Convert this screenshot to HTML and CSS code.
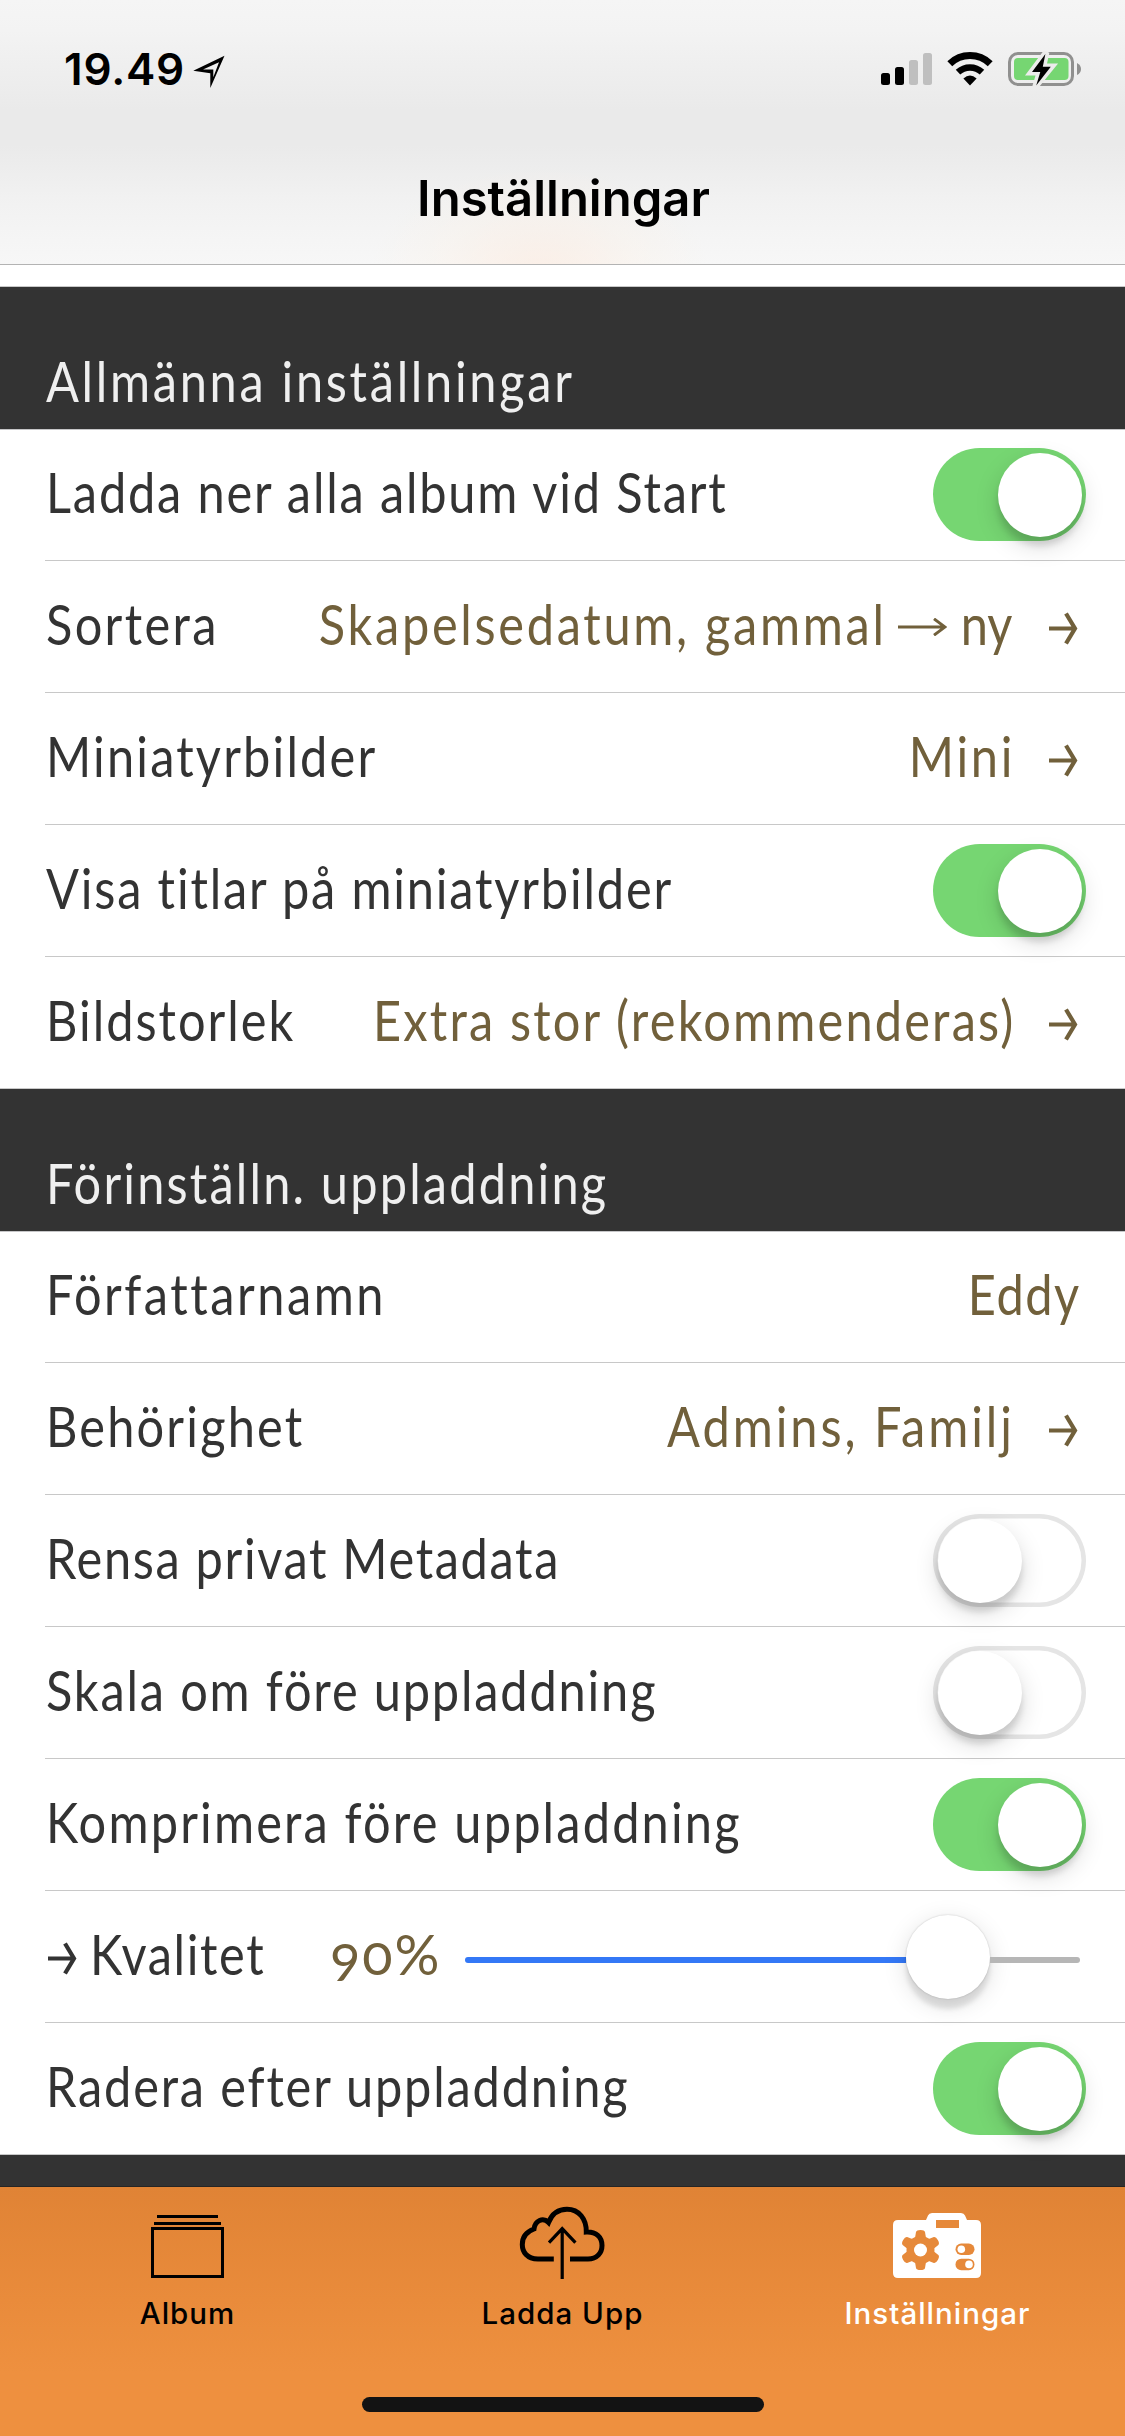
FILE: index.html
```html
<!DOCTYPE html>
<html lang="sv">
<head>
<meta charset="utf-8">
<title>Inställningar</title>
<link rel="stylesheet" href="styles.css">
</head>
<body>
<div class="screen">
  <header class="navbar">
    <div class="status">
      <span class="time">19.49</span>
      <svg class="location" width="36" height="34" viewBox="0 0 36 34"><path d="M3.300 15.700 34.500 .8 20.300 32.900V18.200ZM13 14.400H23.300V22.300L29 7.200Z" fill-rule="evenodd"/></svg>
      <span class="spacer"></span>
      <svg width="52" height="34" viewBox="0 0 52 34">
        <rect x="0" y="21" width="9" height="12" rx="2.5"/><rect x="14" y="15" width="9" height="18" rx="2.5"/>
        <rect x="28" y="8" width="9" height="25" rx="2.5" fill="#bfbfbf"/><rect x="42" y="1" width="9" height="32" rx="2.5" fill="#bfbfbf"/>
      </svg>
      <svg class="wifi" width="46" height="34" viewBox="0 0 46 34">
        <path d="M2.8 11.8A29 29 0 0 1 43.2 11.8" fill="none" stroke="#000" stroke-width="7"/>
        <path d="M11 20.2A17.5 17.5 0 0 1 35 20.2" fill="none" stroke="#000" stroke-width="6.5"/>
        <path d="M23 33.4 16.4 26.4Q23 20.6 29.6 26.4Z"/>
      </svg>
      <svg class="battery" width="74" height="36" viewBox="0 0 74 36">
        <rect x="1.5" y="2.5" width="63" height="31" rx="8.5" fill="none" stroke="#90908f" stroke-width="3"/>
        <rect x="6" y="7" width="54.5" height="22" rx="4" fill="#76d672"/>
        <path d="M69 12Q73 14 73 18T69 24Z" fill="#90908f"/>
        <path d="M38.4 1 23 21.5H31.5L27.2 36 43.8 15.5H35.3Z" fill="#ececeb" stroke="#ececeb" stroke-width="6"/>
        <path d="M37.4 3 24 21H32.3L28.2 34.5 42.8 15.8H34.8Z"/>
      </svg>
    </div>
    <h1 class="title">Inställningar</h1>
  </header>

  <main class="settings">
    <h2 class="section"><span class="text t31">Allmänna inställningar</span></h2>
    <ul class="rows">
      <li class="row"><span class="text t21">Ladda ner alla album vid Start</span><span class="toggle on"><i class="knob"></i></span></li>
      <li class="row"><span class="text t27">Sortera</span>
        <span class="value range"><span class="text t31">Skapelsedatum, gammal</span><svg class="long-arrow" width="49" height="18" viewBox="0 0 49 18"><path d="M0 9H47M36 .8 47 9 36 17.200" fill="none" stroke="#71603b" stroke-width="2.900"/></svg><span class="text t0">ny</span></span>
        <svg class="arrow" width="29" height="33" viewBox="0 0 29 33"><path d="M0 16.500H26M17 1.500 26 16.500 17 31.500" fill="none" stroke="#71603b" stroke-width="4.200"/></svg></li>
      <li class="row"><span class="text t25">Miniatyrbilder</span>
        <span class="value"><span class="text t31">Mini</span></span>
        <svg class="arrow" width="29" height="33" viewBox="0 0 29 33"><path d="M0 16.500H26M17 1.500 26 16.500 17 31.500" fill="none" stroke="#71603b" stroke-width="4.200"/></svg></li>
      <li class="row"><span class="text t21">Visa titlar på miniatyrbilder</span><span class="toggle on"><i class="knob"></i></span></li>
      <li class="row"><span class="text t23">Bildstorlek</span>
        <span class="value"><span class="text t25">Extra stor (rekommenderas)</span></span>
        <svg class="arrow" width="29" height="33" viewBox="0 0 29 33"><path d="M0 16.500H26M17 1.500 26 16.500 17 31.500" fill="none" stroke="#71603b" stroke-width="4.200"/></svg></li>
    </ul>
    <h2 class="section"><span class="text t25">Förinställn. uppladdning</span></h2>
    <ul class="rows">
      <li class="row"><span class="text t29">Författarnamn</span><span class="value plain"><span class="text t17">Eddy</span></span></li>
      <li class="row"><span class="text t25">Behörighet</span>
        <span class="value"><span class="text t34">Admins, Familj</span></span>
        <svg class="arrow" width="29" height="33" viewBox="0 0 29 33"><path d="M0 16.500H26M17 1.500 26 16.500 17 31.500" fill="none" stroke="#71603b" stroke-width="4.200"/></svg></li>
      <li class="row"><span class="text t19">Rensa privat Metadata</span><span class="toggle"><i class="knob"></i></span></li>
      <li class="row"><span class="text t21">Skala om före uppladdning</span><span class="toggle"><i class="knob"></i></span></li>
      <li class="row"><span class="text t25">Komprimera före uppladdning</span><span class="toggle on"><i class="knob"></i></span></li>
      <li class="row quality">
        <svg class="lead-arrow" width="29" height="33" viewBox="0 0 29 33"><path d="M0 16.500H26M17 1.500 26 16.500 17 31.500" fill="none" stroke="#333" stroke-width="4.200"/></svg>
        <span class="text t19 name">Kvalitet</span><span class="percent">90%</span>
        <span class="slider"><i class="filled"></i><i class="knob"></i><i class="rest"></i></span></li>
      <li class="row"><span class="text t21">Radera efter uppladdning</span><span class="toggle on"><i class="knob"></i></span></li>
    </ul>
  </main>

  <footer class="tabbar">
    <nav class="tabs">
      <a class="tab">
        <svg width="91" height="82" viewBox="0 0 91 82"><path d="M15 13.500H76M12 20.500H79M10.500 25.500H80.500V73.500H10.500Z" fill="none" stroke="#000" stroke-width="3"/></svg>
        <span>Album</span></a>
      <a class="tab">
        <svg width="91" height="82" viewBox="0 0 91 82" fill="none" stroke="#000">
          <path d="M36.800 56H21C10 56 5.300 49 5.300 41.500C5.300 34 10 28.500 17 26C18 17.500 26 14 31.500 19.500C35.500 9.500 42 6.300 50 6.300C62 6.300 69.500 16 69.300 29C79 28.500 85 34 85 42.500C85 50 80 56 71 56H53" stroke-width="5"/>
          <path d="M45.200 76V26M32 39.700 45.200 25.700 58.400 39.700" stroke-width="3.200"/>
        </svg>
        <span>Ladda Upp</span></a>
      <a class="tab active">
        <svg width="91" height="82" viewBox="0 0 91 82">
          <path d="M1 22Q1 17 6 17H34L36 12.500Q37 10 40 10H69Q72 10 73 12.500L75 17H84Q89 17 89 22V70Q89 75 84 75H6Q1 75 1 70Z" fill="#fff"/>
          <g fill="#e6893a">
            <rect x="44" y="17" width="23" height="8"/>
            <g transform="translate(28.500 47)">
              <circle r="14"/>
              <path id="cog" d="M-4.500-18Q-4-20 0-20T4.500-18L5.500-12H-5.500ZM-4.500 18Q-4 20 0 20T4.500 18L5.500 12H-5.500Z"/>
              <use href="#cog" transform="rotate(60)"/><use href="#cog" transform="rotate(120)"/>
              <circle r="6.500" fill="#fff"/>
            </g>
            <rect x="63.500" y="40.500" width="19" height="11.500" rx="5.700"/><rect x="63.500" y="55.700" width="19" height="11.500" rx="5.700"/>
          </g>
          <circle cx="69.300" cy="46.200" r="3.800" fill="#fff"/><circle cx="77" cy="61.400" r="3.800" fill="#fff"/>
        </svg>
        <span>Inställningar</span></a>
    </nav>
    <div class="home"></div>
  </footer>
</div>
</body>
</html>
```
FILE: styles.css
```css
* { box-sizing: border-box; }
body { margin: 0; font-family: "Lato", "Open Sans", sans-serif; }
svg { display: block; flex: none; }

.screen { width: 1125px; height: 2436px; display: flex; flex-direction: column; background: #fff; overflow: hidden; }

/* Status bar and title */
.navbar {
  height: 265px;
  flex: none;
  font-family: "Inter", sans-serif;
  font-weight: 600;
  color: #000;
  border-bottom: 1px solid #b3b3b3;
  background:
    radial-gradient(ellipse 170px 110px at 540px 275px, rgba(255, 230, 214, .5), rgba(255, 238, 220, .2) 60%, rgba(255, 240, 225, 0)),
    linear-gradient(#f5f5f5 0, #f3f3f3 30px, #eaeaea 110px, #eaeaea 145px, #f2f2f2 205px, #f7f7f7 264px);
}
.status { height: 169px; padding: 43px 44px 0 64px; display: flex; align-items: flex-start; }
.time { width: 118px; font-size: 44px; line-height: 53px; letter-spacing: .8px; white-space: nowrap; }
.location { margin: 12px 0 0 8px; }
.spacer { flex: 1; }
.status svg:not(.location) { margin-top: 9px; }
.status .wifi { margin-left: 14px; }
.status .battery { margin-left: 15px; margin-top: 8px !important; margin-right: -1px; }
.title { margin: 0 0 0 2px; font-size: 49px; line-height: 59px; font-weight: 600; text-align: center; }

/* Settings list */
.settings { flex: 1; margin-top: 21px; background: #333; border-top: 1px solid #c8c8c8; min-height: 0; overflow: hidden; }
.section {
  margin: 0 0 -1px;
  height: 143px;
  padding: 0 0 15px 46px;
  display: flex;
  align-items: flex-end;
  color: #efefef;
  background: #333;
  border-bottom: 1px solid #c6c6c8;
  font-weight: 400;
}
.rows { margin: 0; padding: 0; list-style: none; background: linear-gradient(#c6c6c8, #c6c6c8) 0 0 / 100% 1px no-repeat #fff; }
.row {
  height: 132px;
  display: flex;
  align-items: center;
  padding: 0 48px 1px 46px;
  color: #333;
  background: linear-gradient(#c8c8c8, #c8c8c8) 45px 100% / 100% 1px no-repeat;
}
.row:last-child { background-position: 0 100%; }
.text { font-size: 56px; line-height: 67px; white-space: nowrap; transform: scaleX(.87); transform-origin: 0 50%; flex: none; }
.row .text { margin-bottom: 6px; }
.value { flex: 1; display: flex; align-items: center; justify-content: flex-end; color: #71603b; margin-right: 34px; min-width: 0; }
.value.range { margin-right: 37px; }
.value .text { transform-origin: 100% 50%; }
.value.plain { margin-right: -4px; }
.long-arrow { margin: 0 6px 0 11px; }

/* Tracking, in tenths of a pixel */
.t0 { letter-spacing: 0; }
.t17 { letter-spacing: 1.7px; }
.t19 { letter-spacing: 1.9px; }
.t21 { letter-spacing: 2.1px; }
.t23 { letter-spacing: 2.3px; }
.t25 { letter-spacing: 2.5px; }
.t27 { letter-spacing: 2.7px; }
.t29 { letter-spacing: 2.9px; }
.t31 { letter-spacing: 3.1px; }
.t34 { letter-spacing: 3.4px; }

.arrow { margin: 4px -1px 0 0; }

.toggle {
  width: 153px;
  height: 93px;
  margin: 0 -9px 0 auto;
  padding: 4.5px;
  border-radius: 47px;
  display: flex;
  flex: none;
  box-shadow: inset 0 0 0 4.5px #e5e5e5;
}
.toggle.on { background: #76d672; box-shadow: none; justify-content: flex-end; }
.knob { width: 84px; height: 84px; border-radius: 50%; background: #fff; flex: none; box-shadow: 0 9px 24px rgba(0, 0, 0, .15), 0 9px 6px rgba(0, 0, 0, .12); }

/* Quality slider */
.lead-arrow { margin: 4px 13px 0 2px; }
.name { width: 240px; }
.percent { font-size: 56px; line-height: 67px; letter-spacing: 2px; font-variant-numeric: oldstyle-nums; color: #71603b; margin-bottom: 6px; width: 135px; }
.slider { flex: 1; display: flex; align-items: center; margin-right: -3px; }
.slider i { display: block; }
.filled { width: 441px; height: 6px; margin-top: 7px; border-radius: 3px 0 0 3px; background: #3478f6; }
.rest { flex: 1; height: 6px; margin-top: 7px; border-radius: 0 3px 3px 0; background: #b6b6b6; }
.slider .knob { box-shadow: 0 0 2px rgba(0, 0, 0, .2), 0 6px 24px rgba(0, 0, 0, .13), 0 10px 5px rgba(0, 0, 0, .1); }

/* Tab bar */
.tabbar {
  height: 250px;
  flex: none;
  border-top: 1px solid #252525;
  background: linear-gradient(#e08335, #e98b3b 45%, #ee903f 75%, #ee903f);
  display: flex;
  flex-direction: column;
  align-items: center;
}
.tabs { width: 100%; height: 210px; padding-top: 16px; display: grid; grid-template-columns: repeat(3, 1fr); }
.tab { display: flex; flex-direction: column; align-items: center; color: #000; font: 450 29.5px/35px "Inter", sans-serif; letter-spacing: 1px; }
.tab span { margin-top: 11px; }
.tab.active { color: #fff; }
.home { width: 402px; height: 15px; border-radius: 8px; background: #131313; }
```
